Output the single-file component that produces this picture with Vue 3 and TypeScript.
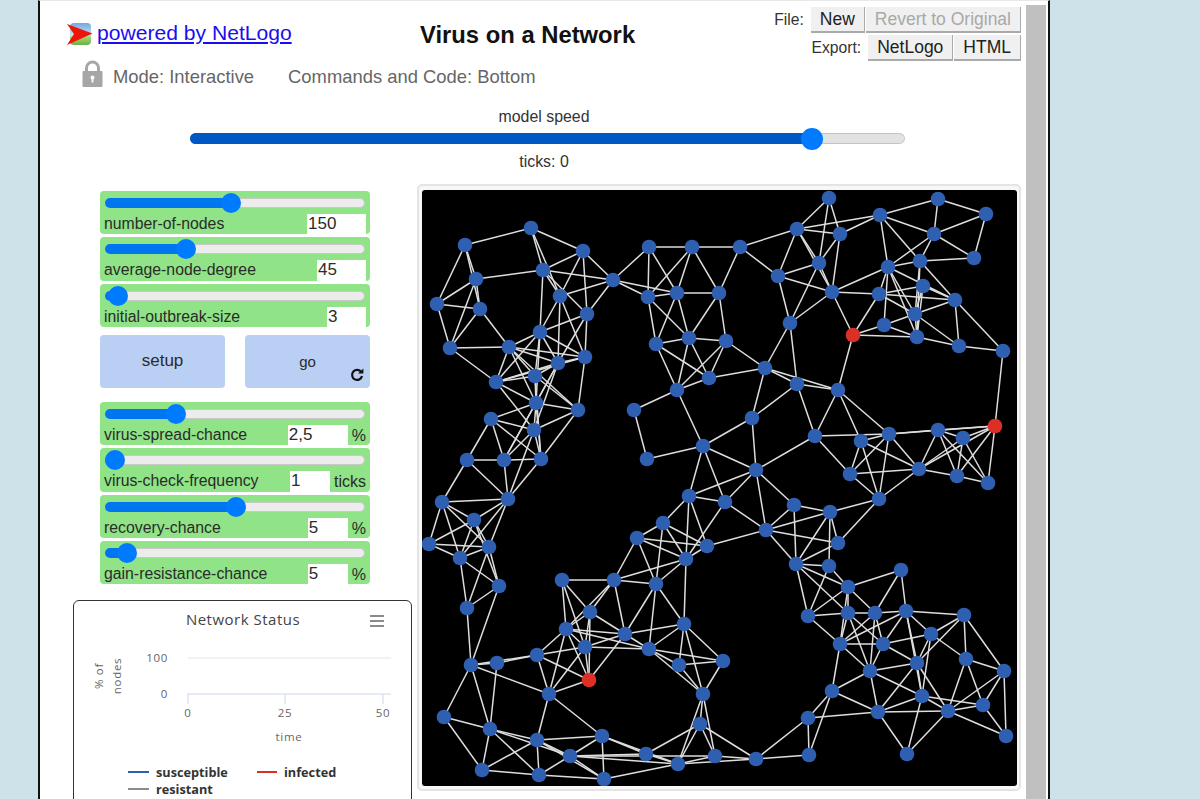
<script setup lang="ts">
import { computed } from 'vue'

interface SliderWidget {
  label: string
  value: string
  ratio: number
  inputWidth: number
  unit?: string
}

const topSliders: SliderWidget[] = [
  { label: 'number-of-nodes', value: '150', ratio: 0.48, inputWidth: 59 },
  { label: 'average-node-degree', value: '45', ratio: 0.295, inputWidth: 49 },
  { label: 'initial-outbreak-size', value: '3', ratio: 0.014, inputWidth: 39 }
]

const bottomSliders: SliderWidget[] = [
  { label: 'virus-spread-chance', value: '2,5', ratio: 0.25, inputWidth: 60, unit: '%' },
  { label: 'virus-check-frequency', value: '1', ratio: 0, inputWidth: 40, unit: 'ticks' },
  { label: 'recovery-chance', value: '5', ratio: 0.5, inputWidth: 40, unit: '%' },
  { label: 'gain-resistance-chance', value: '5', ratio: 0.05, inputWidth: 40, unit: '%' }
]

// page coordinates of the turtles, the svg viewBox below starts at the view's corner
const nodes: [number, number][] = [
  [531, 228], [465, 245], [583, 251], [543, 270], [476, 279], [613, 280], [649, 247], [692, 247], [648, 297], [677, 293],
  [719, 293], [560, 296], [437, 304], [480, 309], [587, 314], [540, 332], [450, 348], [509, 347], [585, 357], [558, 363],
  [535, 376], [496, 382], [656, 344], [689, 338], [726, 341], [709, 378], [677, 390], [536, 403], [578, 410], [634, 410],
  [491, 419], [534, 430], [467, 460], [504, 460], [541, 459], [647, 459], [703, 446], [829, 198], [938, 199], [880, 215],
  [986, 214], [797, 229], [840, 234], [934, 234], [740, 247], [819, 263], [920, 261], [974, 258], [888, 267], [778, 276],
  [832, 292], [879, 294], [923, 286], [955, 300], [915, 314], [884, 325], [790, 323], [853, 335], [917, 337], [959, 346],
  [1003, 351], [765, 368], [797, 384], [838, 390], [752, 418], [995, 426], [815, 436], [889, 434], [861, 441], [938, 430],
  [963, 438], [756, 470], [850, 474], [919, 469], [957, 476], [988, 483], [725, 502], [794, 505], [830, 512], [879, 499],
  [766, 530], [838, 543], [796, 564], [829, 566], [901, 570], [848, 587], [808, 616], [848, 613], [875, 613], [906, 611],
  [964, 615], [931, 634], [840, 644], [883, 644], [917, 663], [966, 659], [1004, 671], [870, 671], [832, 691], [922, 696],
  [983, 705], [948, 711], [878, 712], [808, 718], [1006, 736], [809, 755], [907, 754], [756, 759], [442, 502], [508, 499],
  [474, 520], [429, 544], [489, 547], [460, 558], [499, 586], [467, 608], [689, 496], [663, 523], [637, 538], [707, 546],
  [686, 559], [562, 580], [614, 580], [656, 584], [590, 612], [684, 624], [566, 629], [625, 634], [585, 647], [649, 649],
  [537, 655], [471, 665], [497, 663], [679, 665], [589, 680], [703, 694], [549, 694], [444, 717], [700, 724], [490, 729],
  [602, 736], [537, 740], [646, 754], [570, 756], [715, 756], [678, 764], [482, 770], [539, 775], [604, 779], [723, 661]
]

const infected = [57, 65, 134]

const edgeList = `
0-1 0-2 0-3 0-11 1-12 1-4 1-13 2-3 2-5 2-11 2-14 3-4 3-5 3-15 3-11 3-14 4-12 4-13 4-16
5-6 5-8 5-9 5-11 5-14 6-7 6-8 6-9 7-9 7-10 7-8 7-44 8-9 8-22 8-23 9-10 9-22 9-23 10-23 10-24 10-44
12-13 12-16 13-16 13-17 11-15 11-18 11-19 14-15 14-18 14-19 15-17 15-18 15-19 15-21 15-20 15-27
16-17 16-21 17-18 17-19 17-20 17-21 17-27 17-28 18-19 18-28 18-21 19-20 19-21 19-27 19-33 19-31
20-21 20-28 20-27 20-34 21-27 21-31 27-28 27-30 27-31 27-34 27-33 28-31 28-34 30-31 30-32 30-33 30-34
31-33 31-34 31-109 32-33 33-34 32-108 32-109 33-109 34-109 22-23 22-25 22-26 23-24 23-25 23-26 24-25 24-26
25-26 26-29 26-36 29-35 35-36 36-116 36-76 36-71 36-64
37-41 37-42 37-45 38-39 38-40 38-43 39-41 39-42 39-43 39-48 39-46 40-43 40-47 41-42 41-44 41-45 41-49 41-50
42-45 42-50 43-46 43-47 43-48 44-49 45-49 45-50 45-56 46-47 46-48 46-53 46-54 46-58
48-50 48-51 48-53 48-54 48-55 48-58 49-50 49-56 50-51 50-56 50-57 51-52 51-53 51-57 51-54
52-53 52-54 52-58 53-54 53-59 53-60 54-55 54-58 54-59 55-57 55-58 57-58 57-63 58-59 59-60 60-65
56-61 56-62 61-25 61-24 61-62 61-63 61-64 62-63 62-64 62-66 63-66 63-67 63-68 64-71
66-67 66-71 66-72 67-65 67-68 67-69 67-72 67-73 67-79 68-72 68-73 68-79 69-65 69-70 69-73 69-74 69-75
70-65 70-73 70-74 70-75 65-73 65-75 65-74 72-73 72-79 73-74 73-79 74-75 71-76 71-77 71-80 71-116
76-80 76-116 77-78 77-80 77-82 78-79 78-80 78-81 78-82 78-83 79-81 80-81 80-82 81-82 82-83 82-85 82-86 82-87
83-85 83-86 85-84 85-86 85-87 85-88 85-92 84-88 84-89 86-87 86-92 87-88 87-92 87-93 87-97
88-89 88-92 88-93 88-97 89-90 89-91 89-92 89-93 89-94 89-99 90-91 90-94 90-95 90-96 91-93 91-94 91-95 91-99
92-93 92-97 92-98 93-97 93-94 94-97 94-99 94-101 94-102 95-96 95-100 95-101 96-100 96-101 96-104
97-98 97-99 97-102 98-102 98-103 98-105 99-100 99-101 99-102 99-106 100-101 100-104 101-102 101-104 101-106
102-103 102-106 103-105 103-107 105-107
108-109 108-110 108-111 108-112 108-113 109-110 109-112 109-113 110-111 110-112 110-113 110-114
111-112 111-113 112-113 112-114 112-115 113-114 113-115 114-115 114-131 115-131
131-132 131-130 131-136 131-137 131-139 132-130 132-139 130-126 130-128 130-134 130-136
137-139 137-146 139-141 139-143 139-146 139-147 141-140 141-143 141-146 141-147 141-136 141-148
136-134 136-126 136-128 136-140 134-128 134-127 134-126 134-124
121-122 121-124 121-126 121-128 122-123 122-124 122-126 122-127 122-118 122-120
124-126 124-127 124-128 126-127 126-128 126-129 127-128 127-125 127-123 127-129 128-129
129-123 129-125 129-133 129-149 129-135 123-117 123-118 123-120 123-125 125-133 125-149 125-120 125-135
118-117 118-119 118-120 117-116 117-119 117-120 116-119 116-120 119-120 119-80 120-76
133-149 133-135 149-135 135-138 135-145 135-144 138-142 138-144 138-145 138-107
140-142 140-143 140-148 140-145 142-143 142-145 143-147 143-148 143-145 143-144 145-148 145-144 144-107 145-107
146-147 147-148
`

const edges = computed(() =>
  edgeList.trim().split(/\s+/).map((pair) => {
    const [a, b] = pair.split('-').map(Number)
    return { x1: nodes[a][0], y1: nodes[a][1], x2: nodes[b][0], y2: nodes[b][1] }
  })
)

const fillWidth = (ratio: number) => `${9 + 242 * ratio}px`
const thumbLeft = (ratio: number) => `${242 * ratio - 1}px`
</script>

<template>
  <div class="frame">
    <div class="main">
      <header class="top">
        <div class="brand">
          <a class="brand-link" href="#">
            <svg class="logo" width="26" height="24" viewBox="0 0 26 24">
              <defs>
                <linearGradient id="sky" x1="0" y1="0" x2="0" y2="1">
                  <stop offset="0" stop-color="#6fa8e0" />
                  <stop offset="0.58" stop-color="#cfe2f2" />
                  <stop offset="0.62" stop-color="#a4d873" />
                  <stop offset="1" stop-color="#6cb048" />
                </linearGradient>
              </defs>
              <rect x="3" y="1" width="21" height="22" rx="4" fill="url(#sky)" />
              <path d="M0 2 L25.5 11.5 L0 23 L7 12 Z" fill="#ee1408" />
            </svg>
            <span class="brand-text">powered by NetLogo</span>
          </a>
        </div>
        <h1 class="title">Virus on a Network</h1>
        <div class="actions">
          <div class="action-row">
            <span class="action-label">File:</span>
            <button class="action">New</button>
            <button class="action disabled">Revert to Original</button>
          </div>
          <div class="action-row">
            <span class="action-label">Export:</span>
            <button class="action">NetLogo</button>
            <button class="action">HTML</button>
          </div>
        </div>
      </header>

      <div class="mode-row">
        <svg class="lock" width="21" height="27" viewBox="0 0 21 27">
          <path d="M4.5 12 V8 a6 6 0 0 1 12 0 V12" fill="none" stroke="#a6a6a6" stroke-width="3" />
          <rect x="0.5" y="11" width="20" height="16" rx="1" fill="#a6a6a6" />
          <circle cx="10.5" cy="17.5" r="2" fill="#fff" />
          <rect x="9.6" y="17.5" width="1.8" height="5" fill="#fff" />
        </svg>
        <span class="mode-text">Mode: Interactive</span>
        <span class="mode-text commands">Commands and Code: Bottom</span>
      </div>

      <section class="speed">
        <div class="speed-label">model speed</div>
        <div class="speed-track">
          <div class="speed-fill"></div>
          <div class="speed-thumb"></div>
        </div>
        <div class="speed-label ticks">ticks: 0</div>
      </section>

      <div class="workspace">
        <aside class="side">
          <div class="widgets">
            <div v-for="s in topSliders" :key="s.label" class="slider">
              <div class="track">
                <div class="fill" :style="{ width: fillWidth(s.ratio) }"></div>
                <div class="thumb" :style="{ left: thumbLeft(s.ratio) }"></div>
              </div>
              <div class="slider-row">
                <span class="slider-label">{{ s.label }}</span>
                <span class="slider-value" :style="{ width: s.inputWidth + 'px' }">{{ s.value }}</span>
              </div>
            </div>

            <div class="buttons">
              <button class="run-btn setup">setup</button>
              <button class="run-btn go">
                go
                <svg class="forever" width="14" height="14" viewBox="0 0 14 14">
                  <path d="M11.3 4.2 A5 5 0 1 0 12 8" fill="none" stroke="#111" stroke-width="2.2" />
                  <path d="M8 5.6 L13.4 5.6 L13.4 0.6 Z" fill="#111" />
                </svg>
              </button>
            </div>

            <div v-for="s in bottomSliders" :key="s.label" class="slider">
              <div class="track">
                <div class="fill" :style="{ width: fillWidth(s.ratio) }"></div>
                <div class="thumb" :style="{ left: thumbLeft(s.ratio) }"></div>
              </div>
              <div class="slider-row">
                <span class="slider-label">{{ s.label }}</span>
                <span class="slider-value" :style="{ width: s.inputWidth + 'px' }">{{ s.value }}</span>
                <span class="slider-unit">{{ s.unit }}</span>
              </div>
            </div>
          </div>

          <div class="plot">
            <svg class="plot-svg" width="336" height="220" viewBox="74 601 336 220">
              <text class="plot-title" x="243" y="625" text-anchor="middle">Network Status</text>
              <path d="M370 616 H384 M370 621 H384 M370 626 H384" stroke="#666" stroke-width="1.4" />
              <line x1="188" y1="658" x2="391" y2="658" stroke="#e6e6e6" />
              <path d="M187.5 694 H391 M188 694 V704 M285 694 V704 M383 694 V704" stroke="#ccd6eb" fill="none" />
              <text class="tick" x="168" y="662" text-anchor="end">100</text>
              <text class="tick" x="168" y="698" text-anchor="end">0</text>
              <text class="tick" x="188" y="717" text-anchor="middle">0</text>
              <text class="tick" x="285" y="717" text-anchor="middle">25</text>
              <text class="tick" x="383" y="717" text-anchor="middle">50</text>
              <text class="tick" x="289" y="741" text-anchor="middle">time</text>
              <text class="tick" transform="translate(103 676) rotate(-90)" text-anchor="middle">% of</text>
              <text class="tick" transform="translate(121 676) rotate(-90)" text-anchor="middle">nodes</text>
              <line x1="128" y1="772" x2="149" y2="772" stroke="#2f5fb0" stroke-width="2" />
              <text class="legend" x="156" y="777">susceptible</text>
              <line x1="257" y1="772" x2="277" y2="772" stroke="#dc2f26" stroke-width="2" />
              <text class="legend" x="284" y="777">infected</text>
              <line x1="128" y1="789" x2="149" y2="789" stroke="#8c8c8c" stroke-width="2" />
              <text class="legend" x="156" y="794">resistant</text>
            </svg>
          </div>
        </aside>

        <div class="view">
          <svg class="world" width="595" height="596" viewBox="422 190 595 596">
            <line
              v-for="(e, i) in edges"
              :key="i"
              :x1="e.x1"
              :y1="e.y1"
              :x2="e.x2"
              :y2="e.y2"
              stroke="#dedede"
              stroke-width="1.5"
            />
            <circle
              v-for="(n, i) in nodes"
              :key="'n' + i"
              :cx="n[0]"
              :cy="n[1]"
              r="7.3"
              :fill="infected.includes(i) ? '#dc2f26' : '#2f5fb0'"
            />
          </svg>
        </div>
      </div>
    </div>
    <div class="scrollbar"><div class="scroll-thumb"></div></div>
  </div>
</template>

<style scoped>
.frame {
  display: flex;
  box-sizing: border-box;
  width: 1012px;
  height: 799px;
  margin-left: 38px;
  background: #fff;
  border-left: 2px solid #111;
  border-right: 2px solid #111;
  border-top: 1px solid #e8e8e8;
  overflow: hidden;
  font-family: 'Liberation Sans', Arial, sans-serif;
}

.main {
  width: 986px;
  flex: none;
}

.scrollbar {
  flex: none;
  width: 20px;
  padding-top: 4px;
}

.scroll-thumb {
  height: 100%;
  background: #c0c0c0;
}

.top {
  display: flex;
  height: 53px;
  padding-top: 6px;
  padding-right: 5px;
}

.brand {
  width: 380px;
  flex: none;
  padding: 15px 0 0 27px;
  box-sizing: border-box;
}

.brand-link {
  display: flex;
  align-items: center;
  color: #1a0dee;
  font-size: 21.1px;
  line-height: 24px;
  text-decoration: none;
}

.brand-text {
  margin-left: 4px;
  margin-top: -2px;
  text-decoration: underline;
}

.logo {
  flex: none;
}

.title {
  margin: 15px 0 0;
  font-size: 23.8px;
  line-height: 25px;
  font-weight: 700;
  color: #111;
  white-space: nowrap;
}

.actions {
  margin-left: auto;
  display: flex;
  flex-direction: column;
  gap: 2px;
  align-items: flex-end;
}

.action-row {
  display: flex;
  align-items: flex-start;
  height: 26px;
  gap: 1px;
}

.action-label {
  margin-right: 6px;
  font-size: 15.7px;
  line-height: 26px;
  color: #333;
}

.action {
  height: 26px;
  padding: 0 9px;
  box-sizing: border-box;
  background: #f0f0f0;
  border: none;
  border-right: 1px solid #aaa;
  border-bottom: 2px solid #aaa;
  font-family: inherit;
  font-size: 17.5px;
  color: #222;
}

.action.disabled {
  color: #a8a8a8;
}

.mode-row {
  display: flex;
  align-items: flex-start;
  height: 27px;
  padding-left: 42px;
  font-size: 18.4px;
  color: #666;
}

.mode-text {
  margin-top: 3px;
  line-height: 27px;
}

.lock {
  margin-right: 10px;
}

.commands {
  margin-left: 34px;
}

.speed {
  width: 715px;
  margin: 21px 0 0 150px;
}

.speed-label {
  padding-right: 7px;
  text-align: center;
  font-size: 15.9px;
  line-height: 18px;
  color: #333;
}

.ticks {
  margin-top: 9px;
}

.speed-track {
  position: relative;
  height: 11px;
  margin-top: 7px;
  box-sizing: border-box;
  background: #e2e2e2;
  border: 1px solid #c4c4c4;
  border-radius: 6px;
}

.speed-fill {
  position: absolute;
  left: -1px;
  top: -1px;
  width: 622px;
  height: 11px;
  background: #0058c4;
  border-radius: 6px 0 0 6px;
}

.speed-thumb {
  position: absolute;
  left: 610px;
  top: -6px;
  width: 22px;
  height: 22px;
  background: #007bff;
  border-radius: 50%;
}

.workspace {
  display: flex;
  gap: 5px;
  margin-top: 13px;
  padding-left: 33px;
}

.side {
  width: 339px;
  flex: none;
  padding-top: 7px;
}

.widgets {
  display: flex;
  flex-direction: column;
  gap: 3px;
  width: 270px;
  margin-left: 27px;
}

.slider {
  height: 43.3px;
  box-sizing: border-box;
  padding: 7px 4px 0;
  background: #90e386;
  border-radius: 4px;
  overflow: hidden;
}

.track {
  position: relative;
  height: 10px;
  margin: 0 1px;
  box-sizing: border-box;
  background: #ececec;
  border: 1px solid #c8c8c8;
  border-radius: 5px;
}

.fill {
  position: absolute;
  left: -1px;
  top: -1px;
  height: 10px;
  background: #0075f0;
  border-radius: 5px 0 0 5px;
}

.thumb {
  position: absolute;
  top: -6px;
  width: 20px;
  height: 20px;
  background: #007bff;
  border-radius: 50%;
}

.slider-row {
  display: flex;
  align-items: flex-start;
  height: 20px;
  margin-top: 6px;
}

.slider-label {
  flex: 1;
  font-size: 15.8px;
  line-height: 20px;
  color: #2b2b2b;
  white-space: nowrap;
}

.slider-value {
  height: 21px;
  flex: none;
  box-sizing: border-box;
  padding-left: 1px;
  background: #fff;
  font-size: 17px;
  line-height: 20px;
  color: #2b2b2b;
}

.slider-unit {
  flex: none;
  margin-left: 4px;
  font-size: 16px;
  line-height: 21px;
  color: #2b2b2b;
}

.buttons {
  display: flex;
  justify-content: space-between;
  margin: 5.1px 0 11px;
}

.run-btn {
  position: relative;
  width: 125px;
  height: 53px;
  padding: 0;
  background: #b9cff3;
  border: none;
  border-radius: 4px;
  font-family: inherit;
  color: #2b2b2b;
}

.setup {
  font-size: 17px;
}

.go {
  font-size: 15px;
}

.forever {
  position: absolute;
  right: 6px;
  bottom: 6px;
}

.plot {
  margin-top: 15.4px;
  height: 240px;
  box-sizing: border-box;
  background: #fff;
  border: 1px solid #333;
  border-radius: 6px;
  overflow: hidden;
}

.plot-svg {
  display: block;
  font-family: 'Open Sans', 'Noto Sans', sans-serif;
}

.plot-title {
  font-size: 15px;
  fill: #444;
  letter-spacing: 0.5px;
}

.tick {
  font-size: 11.5px;
  fill: #666;
  letter-spacing: 0.7px;
}

.legend {
  font-size: 12.7px;
  font-weight: 700;
  fill: #333;
}

.view {
  width: 604px;
  height: 607px;
  flex: none;
  box-sizing: border-box;
  padding: 4px 3px 0 3px;
  background: #f7f7f7;
  border: 2px solid #e4e4e4;
  border-radius: 5px;
}

.world {
  display: block;
  background: #000;
  border-radius: 3px;
}
</style>

<style>
html,
body {
  margin: 0;
  height: 799px;
  overflow: hidden;
  background: #cde3e9;
}
</style>
